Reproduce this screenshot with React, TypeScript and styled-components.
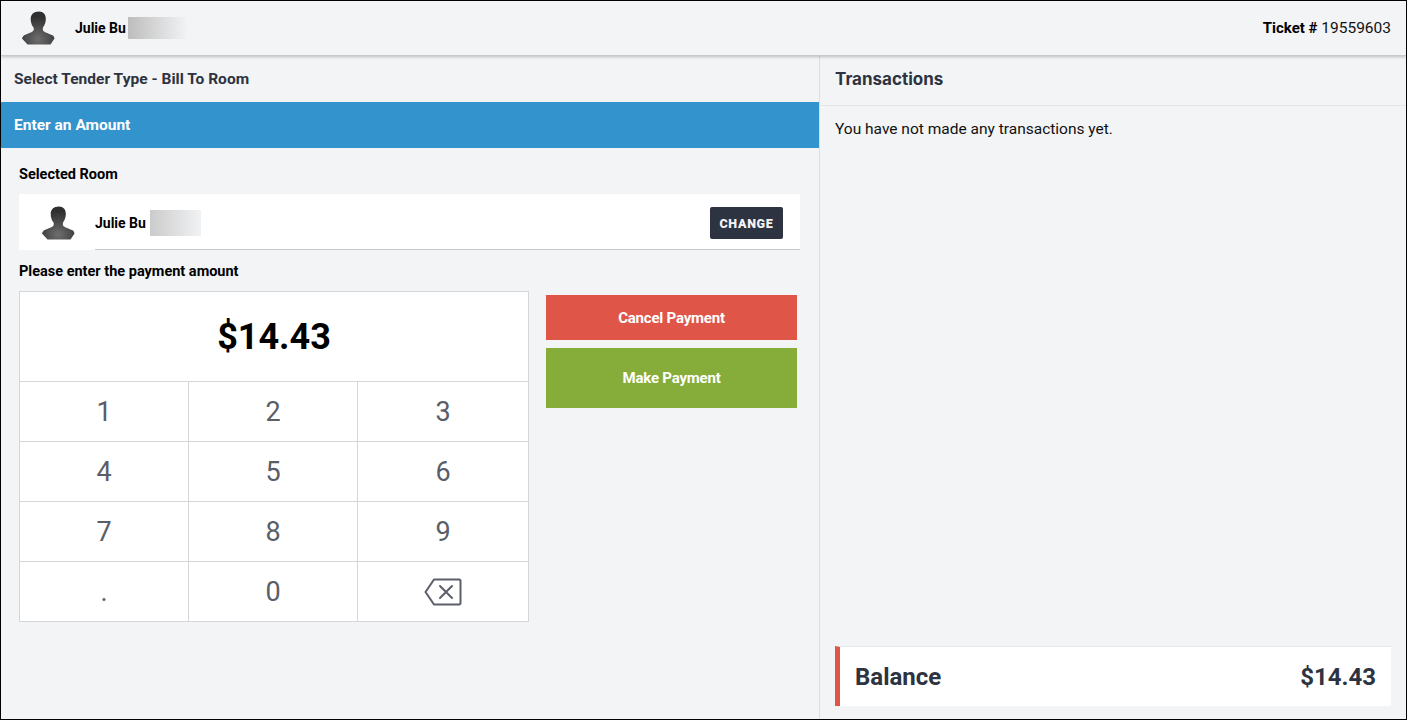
import React from "react";
import styled, { createGlobalStyle } from "styled-components";

const GlobalStyle = createGlobalStyle`
  html, body {
    margin: 0;
    padding: 0;
    background: #f3f4f6;
    font-family: Roboto, "Liberation Sans", sans-serif;
  }
  * { box-sizing: border-box; }
`;

const Page = styled.div`
  width: 1407px;
  height: 720px;
  border: 1px solid #000;
  background: #f3f4f6;
  display: flex;
  flex-direction: column;
  overflow: hidden;
`;

const Header = styled.header`
  height: 55px;
  flex: none;
  display: flex;
  align-items: center;
  justify-content: space-between;
  padding: 0 15px 0 20px;
  position: relative;
  z-index: 1;
  border-bottom: 1px solid #c9cacc;
  box-shadow: 0 1px 3px rgba(0, 0, 0, 0.22);
`;

const Person = styled.div`
  display: flex;
  align-items: center;
  font-size: 14px;
  font-weight: 700;
  color: #000;
`;

const Avatar = styled.svg`
  width: 36px;
  height: 36px;
  flex: none;
  display: block;
`;

const NameWrap = styled.span<{ $gap: number }>`
  position: relative;
  margin-left: ${(p) => p.$gap}px;
  white-space: nowrap;
`;

const Redaction = styled.span<{ $left: number; $width: number; $height: number; $from: string }>`
  position: absolute;
  left: ${(p) => p.$left}px;
  top: 50%;
  width: ${(p) => p.$width}px;
  height: ${(p) => p.$height}px;
  transform: translateY(-50%);
  background: linear-gradient(90deg, ${(p) => p.$from}, #f1f2f4);
`;

const Ticket = styled.div`
  font-size: 15.5px;
  color: #111;
  strong { font-weight: 700; font-size: 15px; color: #000; }
`;

const Columns = styled.div`
  flex: 1;
  display: flex;
  min-height: 0;
`;

const LeftColumn = styled.section`
  width: 819px;
  flex: none;
  border-right: 1px solid #dcdde0;
`;

const RightColumn = styled.section`
  flex: 1;
  display: flex;
  flex-direction: column;
  padding-bottom: 13px;
`;

const TenderTitle = styled.div`
  height: 46px;
  padding: 14px 13px 0;
  font-size: 15.5px;
  font-weight: 700;
  letter-spacing: 0.02px;
  color: #2d3340;
`;

const AmountBar = styled.div`
  height: 46px;
  padding: 0 13px;
  display: flex;
  align-items: center;
  background: #3393cd;
  color: #fff;
  font-size: 15.5px;
  font-weight: 700;
`;

const FormBody = styled.div`
  padding: 0 19px 0 18px;
`;

const FieldLabel = styled.div`
  font-size: 14.5px;
  font-weight: 700;
  color: #000;
  line-height: 18px;
`;

const RoomLabel = styled(FieldLabel)`
  padding-top: 18px;
  margin-bottom: 10px;
`;

const PayLabel = styled(FieldLabel)`
  margin-top: 13px;
  margin-bottom: 10px;
`;

const RoomCard = styled.div`
  height: 56px;
  background: #fff;
  display: flex;
  align-items: center;
  justify-content: space-between;
  padding: 2px 17px 0 22px;
  position: relative;
  &::after {
    content: "";
    position: absolute;
    left: 76px;
    right: 0;
    bottom: 0;
    height: 1px;
    background: #c8c9cc;
  }
`;

const ChangeButton = styled.button`
  width: 73px;
  height: 32px;
  border: none;
  border-radius: 2px;
  background: #2d3340;
  color: #f3f4f6;
  font-family: inherit;
  font-size: 12.5px;
  font-weight: 900;
  letter-spacing: 0.7px;
  padding: 0;
`;

const PayArea = styled.div`
  display: flex;
  align-items: flex-start;
`;

const Keypad = styled.div`
  width: 510px;
  flex: none;
  background: #fff;
  border: 1px solid #d5d6d9;
  display: grid;
  grid-template-columns: 169px 169px 170px;
`;

const AmountDisplay = styled.div`
  grid-column: 1 / -1;
  height: 90px;
  display: flex;
  align-items: center;
  justify-content: center;
  font-size: 36px;
  font-weight: 700;
  color: #000;
  border-bottom: 1px solid #d5d6d9;
`;

const Key = styled.button<{ $lastCol: boolean; $lastRow: boolean }>`
  height: ${(p) => (p.$lastRow ? 59 : 60)}px;
  border: none;
  border-right: ${(p) => (p.$lastCol ? "none" : "1px solid #d5d6d9")};
  border-bottom: ${(p) => (p.$lastRow ? "none" : "1px solid #d5d6d9")};
  background: #fff;
  color: #5a5e68;
  font-family: inherit;
  font-size: 27px;
  font-weight: 400;
  padding: 0;
  display: flex;
  align-items: center;
  justify-content: center;
`;

const Actions = styled.div`
  width: 251px;
  margin-left: 17px;
  padding-top: 4px;
  display: flex;
  flex-direction: column;
  gap: 8px;
`;

const ActionButton = styled.button<{ $bg: string; $height: number }>`
  height: ${(p) => p.$height}px;
  border: none;
  background: ${(p) => p.$bg};
  color: #fff;
  font-family: inherit;
  font-size: 15px;
  font-weight: 700;
  letter-spacing: -0.2px;
  padding: 0;
`;

const TransHeader = styled.div`
  height: 50px;
  flex: none;
  padding: 13px 15px 0;
  border-bottom: 1px solid #e4e5e8;
  font-family: Inter, "Open Sans", sans-serif;
  font-size: 17px;
  font-weight: 700;
  color: #2d3340;
`;

const EmptyNote = styled.div`
  padding: 14px 15px 0;
  font-size: 15.5px;
  color: #111;
  line-height: 18px;
`;

const BalanceCard = styled.div`
  margin: auto 15px 0;
  height: 60px;
  flex: none;
  background: #fff;
  border-left: 5px solid #df5648;
  border-top: 1px solid #e4e5e8;
  padding: 0 15px;
  display: flex;
  align-items: center;
  justify-content: space-between;
  font-size: 24px;
  font-weight: 700;
  color: #2d3340;
`;

const PersonIcon = () => (
  <Avatar viewBox="0 0 36 36">
    <defs>
      <radialGradient id="bust" cx="50%" cy="85%" r="70%">
        <stop offset="0%" stopColor="#6e6e6e" />
        <stop offset="100%" stopColor="#2f2f2f" />
      </radialGradient>
    </defs>
    <path
      fill="url(#bust)"
      d="M18 1.5c4.3 0 6.8 3 6.8 7.2 0 2.2-.4 4-1 5.6-.5 1.300-1.200 2.300-1.800 3.100-.3.500-.2 2.900.3 3.500 1.600 1.600 7.200 3 9.700 4.700.6.400 1 1.300 1.500 2.800L29.500 34.500H6.500L1 28.500c.6-1.500 1-2.400 1.600-2.800 2.500-1.700 8-3.100 9.600-4.700.6-.6.700-3 .4-3.500-.7-.8-1.400-1.800-1.900-3.100-.6-1.600-1-3.400-1-5.600 0-4.200 2.800-7.300 8.300-7.300z"
    />
  </Avatar>
);

const BackspaceIcon = () => (
  <svg width="38" height="28" viewBox="0 0 38 28" fill="none" stroke="#5a5e68" strokeWidth="2" strokeLinejoin="round" strokeLinecap="round">
    <path d="M10 1.500H35a1.500 1.500 0 0 1 1.500 1.500v22a1.500 1.500 0 0 1-1.500 1.500H10L1.500 14z" />
    <path d="M16 8l12 12M28 8L16 20" />
  </svg>
);

const keys = ["1", "2", "3", "4", "5", "6", "7", "8", "9", ".", "0", "back"];

export default function App() {
  return (
    <>
      <GlobalStyle />
      <Page>
        <Header>
          <Person>
            <PersonIcon />
            <NameWrap $gap={18}>
              Julie Bu
              <Redaction $left={53} $width={58} $height={22} $from="#bdbdbd" />
            </NameWrap>
          </Person>
          <Ticket>
            <strong>Ticket #</strong> 19559603
          </Ticket>
        </Header>
        <Columns>
          <LeftColumn>
            <TenderTitle>Select Tender Type - Bill To Room</TenderTitle>
            <AmountBar>Enter an Amount</AmountBar>
            <FormBody>
              <RoomLabel>Selected Room</RoomLabel>
              <RoomCard>
                <Person>
                  <PersonIcon />
                  <NameWrap $gap={18}>
                    Julie Bu
                    <Redaction $left={55} $width={51} $height={26} $from="#cbcbcb" />
                  </NameWrap>
                </Person>
                <ChangeButton>CHANGE</ChangeButton>
              </RoomCard>
              <PayLabel>Please enter the payment amount</PayLabel>
              <PayArea>
                <Keypad>
                  <AmountDisplay>$14.43</AmountDisplay>
                  {keys.map((k, i) => (
                    <Key key={k} $lastCol={i % 3 === 2} $lastRow={i >= 9}>
                      {k === "back" ? <BackspaceIcon /> : k}
                    </Key>
                  ))}
                </Keypad>
                <Actions>
                  <ActionButton $bg="#df5648" $height={45}>Cancel Payment</ActionButton>
                  <ActionButton $bg="#86ad39" $height={60}>Make Payment</ActionButton>
                </Actions>
              </PayArea>
            </FormBody>
          </LeftColumn>
          <RightColumn>
            <TransHeader>Transactions</TransHeader>
            <EmptyNote>You have not made any transactions yet.</EmptyNote>
            <BalanceCard>
              <span>Balance</span>
              <span>$14.43</span>
            </BalanceCard>
          </RightColumn>
        </Columns>
      </Page>
    </>
  );
}
